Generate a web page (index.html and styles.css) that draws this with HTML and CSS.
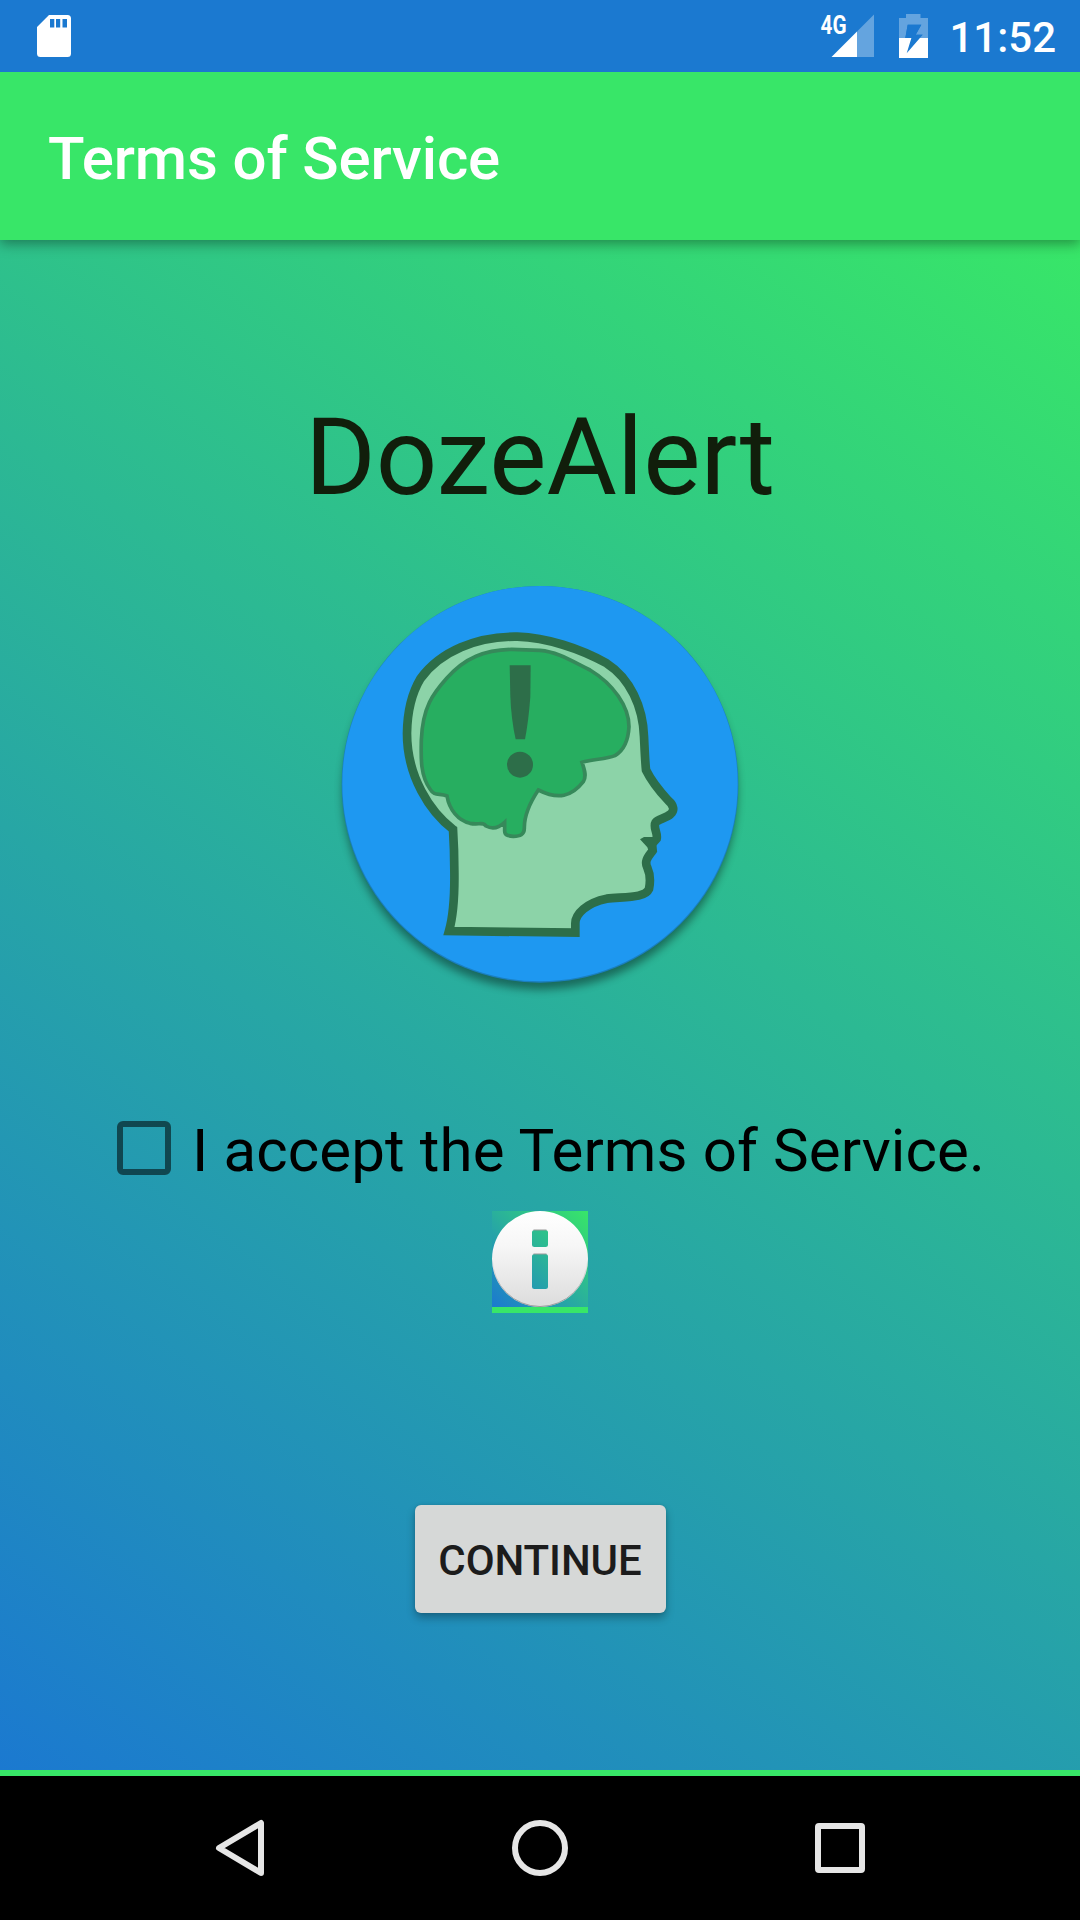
FILE: index.html
```html
<!DOCTYPE html>
<html lang="en">
<head>
<meta charset="utf-8">
<title>Terms of Service</title>
<link rel="stylesheet" href="styles.css">
</head>
<body>
<div class="screen">
  <header class="status">
    <svg class="sd" width="34" height="42" viewBox="0 0 34 42">
      <path fill="#fff" fill-rule="evenodd" d="M12 0H30.500Q34 0 34 3.500V38.500Q34 42 30.500 42H3.500Q0 42 0 38.500V12ZM13 4V12.500H17.300V4ZM19 4V12.500H23.200V4ZM25.500 4V12.500H30V4Z"/>
    </svg>
    <div class="status-right">
      <svg class="signal" width="56" height="48" viewBox="819 12 56 48">
        <path fill="#fff" fill-opacity=".32" d="M857 31.500L874 14.500V57H857Z"/>
        <path fill="#fff" d="M831.500 57L857 31.500V57Z"/>
        <text class="net" x="820.500" y="33.500" textLength="26" lengthAdjust="spacingAndGlyphs">4G</text>
      </svg>
      <svg class="battery" width="29" height="44" viewBox="899 14 29 44">
        <path fill="#fff" fill-opacity=".32" fill-rule="evenodd" d="M906 14H920.500V18H928V38H916.500L922.700 34.700H915.700L921.300 24.700H907.700L905.300 38H899V18H906Z"/>
        <path class="bolt" d="M907.700 24.700H921.300L915.700 34.700H922.700L906.700 53.300L911.300 38.300H905.300Z"/>
        <path fill="#fff" d="M899 38H911.400L906.700 53.300L919.900 38H928V58H899Z"/>
      </svg>
      <span class="clock">11:52</span>
    </div>
  </header>
  <div class="appbar"><h1>Terms of Service</h1></div>
  <main class="content">
    <h2 class="brand">DozeAlert</h2>
    <svg class="logo" width="420" height="430" viewBox="0 0 1260 1290">
      <defs>
        <filter id="soft" x="-10%" y="-10%" width="120%" height="120%"><feGaussianBlur stdDeviation="12"/></filter>
      </defs>
      <circle cx="630" cy="667" r="592" fill="#000" opacity=".4" filter="url(#soft)"/>
      <circle cx="630" cy="643" r="595" fill="#1b7fbf"/>
      <circle cx="630" cy="641" r="593" fill="#1e98f1"/>
      <path fill="#8cd3a8" stroke="#2d6e49" stroke-width="26" d="M357 1083C372 1030 374 960 373 900C373 850 371 810 369 778C300 725 231 620 231 490C232 420 245 370 272 325C330 245 440 198 562 200C650 203 750 235 830 280C900 325 939 410 942 500C944 540 945 570 948 600C965 635 990 665 1015 692C1032 706 1034 722 1022 732C1008 745 985 747 977 757C968 772 984 788 980 806L966 822L968 842C955 860 942 872 952 893C962 915 960 942 957 957C945 984 890 980 830 986C770 998 736 1032 736 1060V1088Z"/>
      <path fill="#2d6e49" d="M930 808L942 801H985L975 842L957 846L952 832Z"/>
      <path fill="#27ae60" stroke="#36895a" stroke-width="11" d="M351 678C330 668 312 680 300 657C270 615 273 560 274 510C278 410 310 370 350 325C405 262 465 240 545 238L630 241C680 245 720 270 780 300C850 342 897 410 897 470C895 510 880 542 855 557C825 569 790 566 756 577C764 600 770 620 760 635C725 680 685 690 625 660C605 690 582 730 583 775C583 795 570 798 550 799C532 798 523 795 524 780V757C508 772 490 780 468 768C460 755 445 765 420 760C385 752 358 720 351 678Z"/>
      <path fill="#2d6e49" d="M539 286H602L601 380Q596 450 585 508H557Q544 450 541 380Z"/>
      <circle cx="570" cy="584" r="39" fill="#2d6e49"/>
    </svg>
    <label class="accept"><span class="box"></span><span>I accept the Terms of Service.</span></label>
    <div class="info">
      <svg width="96" height="96" viewBox="0 0 96 96">
        <defs>
          <linearGradient id="disc" x1="0" y1="0" x2="0" y2="1"><stop offset="0" stop-color="#fff"/><stop offset=".35" stop-color="#f7f7f7"/><stop offset="1" stop-color="#dcdcdc"/></linearGradient>
          <linearGradient id="rim" x1="0" y1="0" x2="0" y2="1"><stop offset=".5" stop-color="#999" stop-opacity="0"/><stop offset="1" stop-color="#999"/></linearGradient>
        </defs>
        <path fill="url(#disc)" fill-rule="evenodd" d="M48 0A48 48 0 0 1 48 96A48 48 0 0 1 48 0ZM42.500 19Q40 19 40 21.500V33.500Q40 36 42.500 36H53.500Q56 36 56 33.500V21.500Q56 19 53.500 19ZM42.500 43Q40 43 40 45.500V75.500Q40 78 42.500 78H53.500Q56 78 56 75.500V45.500Q56 43 53.500 43Z"/>
        <circle cx="48" cy="48" r="47.500" fill="none" stroke="url(#rim)"/>
        <path stroke="#999" stroke-width="1.200" d="M41.500 19H54.500M41.500 43H54.500"/>
      </svg>
    </div>
    <button class="continue">CONTINUE</button>
  </main>
  <nav class="nav">
    <svg width="60" height="60" viewBox="210 1818 60 60"><path d="M219 1848L261 1823V1873Z"/></svg>
    <svg width="60" height="60" viewBox="510 1818 60 60"><circle cx="540" cy="1848" r="25"/></svg>
    <svg width="60" height="60" viewBox="810 1818 60 60"><rect x="818" y="1826" width="44" height="44" rx="1"/></svg>
  </nav>
</div>
</body>
</html>
```
FILE: styles.css
```css
* { box-sizing: border-box; }
body { margin: 0; font-family: Roboto, sans-serif; }
h1, h2 { margin: 0; }
svg { display: block; }

.screen {
  width: 1080px;
  height: 1920px;
  display: flex;
  flex-direction: column;
  overflow: hidden;
}

.status {
  position: relative;
  z-index: 1;
  height: 72px;
  padding: 0 24px 0 37px;
  background: #1b79d0;
  display: flex;
  align-items: center;
  justify-content: space-between;
}
.status-right { display: flex; align-items: center; }
.signal { overflow: visible; }
.net { font: 700 25px Roboto, sans-serif; fill: #fff; }
.battery { margin: 0 21px 0 24px; }
.bolt { fill: #1b79d0; }
.clock {
  padding-top: 3px;
  color: #fff;
  font-size: 42px;
  font-weight: 500;
  line-height: 50px;
}

.appbar {
  position: relative;
  height: 168px;
  padding: 51px 48px 0;
  background: #38e668;
  box-shadow: 0 4px 12px rgba(0, 0, 0, .36);
}
.appbar h1 {
  color: #fff;
  font-size: 60px;
  font-weight: 500;
  line-height: 72px;
  letter-spacing: -.12px;
}

.content {
  height: 1536px;
  padding-top: 147px;
  border-bottom: 6px solid #38e668;
  background: linear-gradient(215.22deg, #38e668, #1b79d0) padding-box;
  display: flex;
  flex-direction: column;
  align-items: center;
}
.brand {
  color: #111e0b;
  font-size: 108px;
  font-weight: 400;
  line-height: 140px;
}
.logo { margin-top: 43px; }

.accept {
  align-self: flex-start;
  margin: 115px 0 0 117px;
  display: flex;
  gap: 21px;
  font-size: 60px;
  line-height: 72px;
  letter-spacing: .12px;
  white-space: nowrap;
}
.box {
  width: 54px;
  height: 54px;
  margin-top: 6px;
  border: 6px solid rgba(0, 0, 0, .54);
  border-radius: 6px;
}

.info {
  margin-top: 24px;
  border-bottom: 6px solid #38e668;
  background: linear-gradient(225deg, #38e668, #1b79d0) padding-box;
}

.continue {
  width: 251px;
  height: 108px;
  margin-top: 192px;
  padding: 2px 0 0;
  border: 0;
  border-radius: 6px;
  background: #d6d8d7;
  box-shadow: 0 5px 8px rgba(0, 0, 0, .28), 0 0 3px rgba(0, 0, 0, .12);
  color: #1c1c1c;
  font: 500 42px Roboto, sans-serif;
  letter-spacing: -.1px;
}

.nav {
  height: 144px;
  background: #000;
  display: grid;
  grid-template-columns: repeat(3, 300px);
  justify-content: center;
  align-items: center;
  justify-items: center;
}
.nav svg {
  fill: none;
  stroke: #e6e6e6;
  stroke-width: 6;
  stroke-linejoin: round;
}
```
